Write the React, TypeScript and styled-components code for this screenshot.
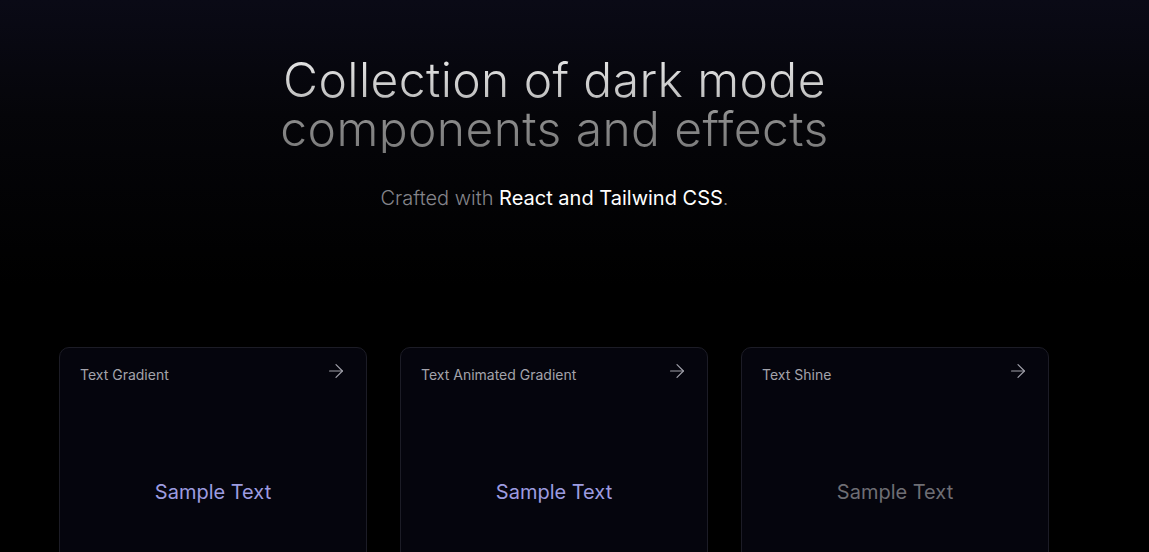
import styled, { createGlobalStyle } from "styled-components";
import { ArrowRight } from "lucide-react";

const GlobalStyle = createGlobalStyle`
  * { box-sizing: border-box; }
  html, body {
    margin: 0;
    padding: 0;
    background: #000;
    font-family: Inter, "Noto Sans", "Liberation Sans", sans-serif;
    overflow: hidden;
  }
`;

export const Page = styled.div`
  min-height: 552px;
  padding-right: 40px;
  background: linear-gradient(180deg, #0a0a16 0%, #050509 18%, #000 45%, #000 100%);
`;

export const Hero = styled.section`
  display: flex;
  flex-direction: column;
  align-items: center;
  padding-top: 55px;
`;

export const Title = styled.h1`
  margin: 0;
  font-size: 48px;
  font-weight: 300;
  line-height: 49px;
  letter-spacing: 0.4px;
  text-align: center;
  background: linear-gradient(180deg, #e8e8e8 0%, #c4c4c4 40%, #8d8d8d 60%, #7a7a7a 100%);
  -webkit-background-clip: text;
  background-clip: text;
  color: transparent;
`;

export const Subtitle = styled.p`
  margin: 31px 0 0;
  font-size: 20px;
  font-weight: 300;
  line-height: 28px;
  color: #85858b;

  & strong {
    font-weight: 400;
    color: #fff;
  }
`;

export const Grid = styled.div`
  display: grid;
  grid-template-columns: repeat(3, 308px);
  gap: 33px;
  padding: 0 0 0 59px;
  margin-top: 135px;
`;

export const Card = styled.div`
  position: relative;
  height: 290px;
  border: 1px solid #1c1c26;
  border-radius: 10px;
  background: #05050d;
  display: flex;
  flex-direction: column;
`;

export const CardHeader = styled.div`
  display: flex;
  justify-content: space-between;
  align-items: flex-start;
  padding: 12px 19px 0 20px;
  color: #a1a1aa;
`;

export const CardLabel = styled.span`
  font-size: 14px;
  line-height: 18px;
  margin-top: 6px;
  color: #a3a3ab;
`;

export const CardBody = styled.div`
  flex: 1;
  display: flex;
  align-items: center;
  justify-content: center;
  padding-bottom: 36px;
`;

export const Sample = styled.span<{ $tone: "purple" | "gray" }>`
  font-size: 20px;
  font-weight: 400;
  color: ${({ $tone }) => ($tone === "purple" ? "#9d9ce0" : "#6e6e74")};
`;

const cards: { label: string; tone: "purple" | "gray" }[] = [
  { label: "Text Gradient", tone: "purple" },
  { label: "Text Animated Gradient", tone: "purple" },
  { label: "Text Shine", tone: "gray" },
];

const App = () => {
  return (
    <>
      <GlobalStyle />
      <Page>
        <Hero>
          <Title>
            Collection of dark mode
            <br />
            components and effects
          </Title>
          <Subtitle>
            Crafted with <strong>React and Tailwind CSS</strong>.
          </Subtitle>
        </Hero>
        <Grid>
          {cards.map((c) => (
            <Card key={c.label}>
              <CardHeader>
                <CardLabel>{c.label}</CardLabel>
                <ArrowRight size={22} strokeWidth={1.3} />
              </CardHeader>
              <CardBody>
                <Sample $tone={c.tone}>Sample Text</Sample>
              </CardBody>
            </Card>
          ))}
        </Grid>
      </Page>
    </>
  );
};

export default App;
